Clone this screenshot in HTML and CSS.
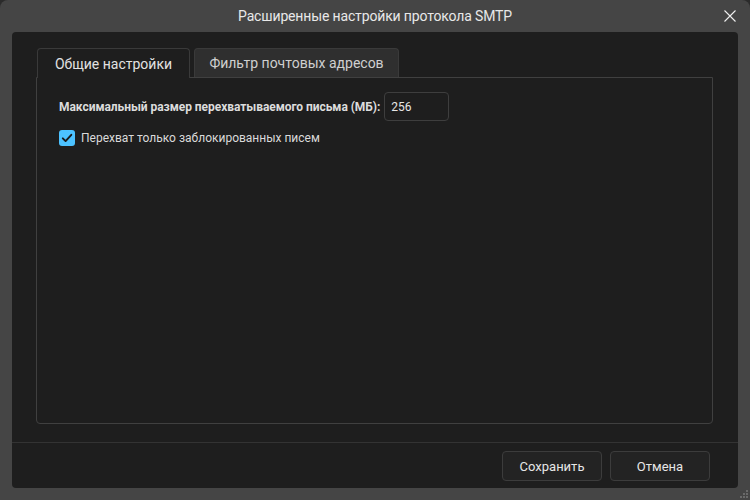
FILE: index.html
```html
<!DOCTYPE html>
<html lang="ru">
<head>
    <meta charset="UTF-8">
    <title>Расширенные настройки протокола SMTP</title>
    <link rel="stylesheet" href="styles.css">
</head>
<body>
    <div class="window">
        <div class="titlebar">
            <span class="title">Расширенные настройки протокола SMTP</span>
            <button class="close-btn" aria-label="Закрыть">
                <svg width="12" height="12" viewBox="0 0 12 12">
                    <path d="M0.5 0.5 L11.5 11.5 M11.5 0.5 L0.5 11.5" stroke="#f0f0f0" stroke-width="1.1" fill="none"/>
                </svg>
            </button>
        </div>

        <div class="content">
            <div class="tabs-area">
                <div class="tabs">
                    <div class="tab active">Общие настройки</div>
                    <div class="tab">Фильтр почтовых адресов</div>
                </div>
                <div class="tab-panel">
                    <div class="field-row">
                        <label class="field-label" for="maxSize">Максимальный размер перехватываемого письма (МБ):</label>
                        <input class="field-input" id="maxSize" type="text" value="256">
                    </div>
                    <label class="check-row">
                        <span class="checkbox">
                            <svg width="12" height="12" viewBox="0 0 12 12">
                                <path d="M1.8 6.3 L4.6 9.1 L10.3 2.8" stroke="#1a1a1a" stroke-width="1.9" fill="none" stroke-linecap="round" stroke-linejoin="round"/>
                            </svg>
                        </span>
                        <span>Перехват только заблокированных писем</span>
                    </label>
                </div>
            </div>

            <div class="footer">
                <button class="btn">Сохранить</button>
                <button class="btn">Отмена</button>
            </div>
        </div>

        <svg class="grip" width="10" height="10" viewBox="0 0 10 10">
            <rect x="7" y="1" width="2" height="2" fill="#6a6a6a"/>
            <rect x="4" y="4" width="2" height="2" fill="#6a6a6a"/>
            <rect x="7" y="4" width="2" height="2" fill="#6a6a6a"/>
            <rect x="1" y="7" width="2" height="2" fill="#6a6a6a"/>
            <rect x="4" y="7" width="2" height="2" fill="#6a6a6a"/>
            <rect x="7" y="7" width="2" height="2" fill="#6a6a6a"/>
        </svg>
    </div>
</body>
</html>
```

FILE: styles.css
```css
html, body {
    margin: 0;
    height: 100%;
    background-color: #2b2b2b;
}

body {
    font-family: Roboto, "Noto Sans", sans-serif;
    color: #dedede;
}

.window {
    height: 500px;
    background-color: #454545;
    border-radius: 8px 8px 0 0;
    display: flex;
    flex-direction: column;
    position: relative;
    box-sizing: border-box;
}

/* заголовок окна */
.titlebar {
    height: 32px;
    flex-shrink: 0;
    display: flex;
    align-items: center;
    justify-content: center;
    position: relative;
}

.title {
    font-size: 14px;
    color: #e8e8e8;
    letter-spacing: -0.15px;
}

.close-btn {
    position: absolute;
    right: 14px;
    top: 10px;
    width: 12px;
    height: 12px;
    padding: 0;
    border: none;
    background: none;
    display: flex;
}

.content {
    flex: 1;
    margin: 0 12px 12px;
    background-color: #1e1e1e;
    border-radius: 4px;
    display: flex;
    flex-direction: column;
}

.tabs-area {
    flex: 1;
    display: flex;
    flex-direction: column;
    padding: 16px 25px 0 24px;
}

.tabs {
    display: flex;
    gap: 4px;
    height: 29px;
    padding-left: 1px;
}

.tab {
    display: flex;
    align-items: center;
    justify-content: center;
    box-sizing: border-box;
    border: 1px solid #3a3a3a;
    border-bottom: none;
    border-radius: 4px 4px 0 0;
    font-size: 14px;
    color: #d0d0d0;
    background-color: #2f2f2f;
    width: 205px;
}

.tab.active {
    background-color: #1e1e1e;
    color: #e2e2e2;
    width: 153px;
    height: 30px;
    position: relative;
    z-index: 1;
}

.tab-panel {
    height: 347px;
    box-sizing: border-box;
    border: 1px solid #404040;
    border-radius: 0 0 4px 4px;
    padding: 14px 22px;
    display: flex;
    flex-direction: column;
    gap: 9px;
}

.field-row {
    display: flex;
    align-items: center;
    gap: 4px;
}

.field-label {
    font-size: 12px;
    font-weight: bold;
    color: #dcdcdc;
    letter-spacing: -0.05px;
}

.field-input {
    width: 65px;
    height: 29px;
    box-sizing: border-box;
    background-color: #1e1e1e;
    border: 1px solid #3e3e3e;
    border-radius: 4px;
    color: #e6e6e6;
    font-family: inherit;
    font-size: 12px;
    padding: 0 6px;
}

.check-row {
    display: flex;
    align-items: center;
    gap: 6px;
    font-size: 12px;
    color: #dadada;
}

.checkbox {
    width: 16px;
    height: 16px;
    border-radius: 3px;
    background-color: #4cc2ff;
    display: flex;
    align-items: center;
    justify-content: center;
}

/* кнопки снизу */
.footer {
    margin-top: 17px;
    border-top: 1px solid #333333;
    height: 46px;
    box-sizing: border-box;
    display: flex;
    justify-content: flex-end;
    align-items: flex-start;
    gap: 8px;
    padding: 8px 28px 0 0;
}

.btn {
    width: 100px;
    height: 30px;
    background-color: #232323;
    border: 1px solid #3c3c3c;
    border-radius: 4px;
    color: #e6e6e6;
    font-family: inherit;
    font-size: 13px;
}

.grip {
    position: absolute;
    right: 1px;
    bottom: 1px;
}
```
